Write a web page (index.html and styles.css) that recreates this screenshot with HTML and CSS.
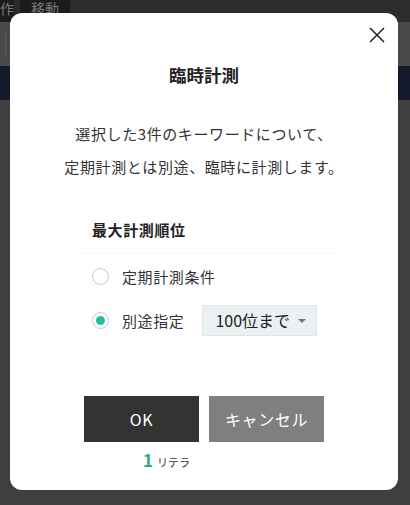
FILE: index.html
```html
<!DOCTYPE html>
<html lang="ja">
<head>
<meta charset="utf-8">
<link rel="stylesheet" href="styles.css">
</head>
<body>
<div class="page">
  <div class="topbar">
    <span class="tb-btn tb-cut">操作</span>
    <span class="tb-btn">移動</span>
  </div>
  <div class="subbar"><span class="subbar-line"></span></div>
  <div class="navbar"></div>
  <div class="content"></div>
</div>

<div class="modal">
  <button class="close" aria-label="閉じる">
    <svg width="16" height="16" viewBox="0 0 16 16"><path d="M1 1 L15 15 M15 1 L1 15" stroke="#222" stroke-width="1.5" fill="none"/></svg>
  </button>
  <h2 class="title">臨時計測</h2>
  <p class="desc">選択した3件のキーワードについて、<br>定期計測とは別途、臨時に計測します。</p>
  <div class="section">
    <div class="section-head">最大計測順位</div>
    <label class="opt">
      <span class="radio"></span>
      <span class="opt-label">定期計測条件</span>
    </label>
    <label class="opt">
      <span class="radio checked"></span>
      <span class="opt-label">別途指定</span>
      <span class="select">100位まで<span class="caret"></span></span>
    </label>
  </div>
  <div class="actions">
    <button class="btn btn-ok">OK</button>
    <button class="btn btn-cancel">キャンセル</button>
  </div>
  <div class="credit"><span class="credit-num">1</span><span class="credit-unit">リテラ</span></div>
</div>
</body>
</html>
```

FILE: styles.css
```css
html, body {
  margin: 0;
  padding: 0;
}
body {
  width: 410px;
  height: 505px;
  overflow: hidden;
  background: #3e3e3e;
  font-family: "Noto Sans CJK JP", "Noto Sans", sans-serif;
  position: relative;
}
.page {
  display: flex;
  flex-direction: column;
  height: 505px;
}
.topbar {
  height: 22px;
  background: #2c2c2c;
  display: flex;
  gap: 6px;
  align-items: flex-start;
}
.tb-btn {
  background: #1c1c1c;
  color: #7a7a7a;
  font-size: 14px;
  line-height: 17px;
  padding: 0 11px;
  height: 22px;
}
.tb-cut {
  margin-left: -16px;
  width: 30px;
  padding: 0;
  overflow: hidden;
  white-space: nowrap;
  direction: rtl;
}
.subbar {
  height: 44px;
  background: #4a4a4a;
  position: relative;
}
.subbar-line {
  display: block;
  margin-left: 5px;
  margin-top: 10px;
  width: 1px;
  height: 26px;
  background: #5c5c5c;
}
.navbar {
  height: 34px;
  background: #141a2c;
}
.content {
  flex: 1;
  background: #3f3f3f;
}

.modal {
  position: absolute;
  left: 10px;
  top: 13px;
  width: 388px;
  height: 477px;
  background: #fff;
  border-radius: 12px;
  box-sizing: border-box;
  color: #333;
}
.close {
  position: absolute;
  top: 14px;
  right: 13px;
  border: 0;
  background: none;
  padding: 0;
  width: 16px;
  height: 16px;
  display: block;
}
.close svg { display: block; }
.title {
  margin: 50px 0 0;
  font-size: 17.5px;
  line-height: 24px;
  font-weight: 700;
  text-align: center;
  color: #222;
}
.desc {
  margin: 30px 0 0;
  font-size: 15px;
  letter-spacing: 0.6px;
  line-height: 33px;
  text-align: center;
  color: #333;
}
.section {
  margin: 35px 0 0 70px;
  width: 257px;
}
.section-head {
  font-size: 15px;
  font-weight: 700;
  line-height: 24px;
  letter-spacing: 0.6px;
  padding: 0 12px 11px;
  border-bottom: 1px solid #f6f6f6;
  color: #222;
}
.opt {
  display: flex;
  align-items: center;
  height: 44px;
  padding-left: 12px;
  font-size: 15px;
  letter-spacing: 0.6px;
  color: #333;
}
.radio {
  width: 17px;
  height: 17px;
  box-sizing: border-box;
  border: 1px solid #c9c9c9;
  border-radius: 50%;
  display: flex;
  align-items: center;
  justify-content: center;
  flex: none;
}
.radio.checked::after {
  content: "";
  width: 9px;
  height: 9px;
  border-radius: 50%;
  background: #23bf9f;
}
.opt-label {
  margin-left: 13px;
}
.select {
  margin-left: 18px;
  width: 115px;
  height: 31px;
  box-sizing: border-box;
  background: #ebf1f3;
  border: 1px solid #dde6ea;
  font-size: 16px;
  letter-spacing: 0;
  color: #222;
  display: flex;
  align-items: center;
  padding-left: 12px;
  position: relative;
}
.caret {
  position: absolute;
  right: 10px;
  top: 13px;
  width: 0;
  height: 0;
  border-left: 4px solid transparent;
  border-right: 4px solid transparent;
  border-top: 4px solid #777;
}
.actions {
  margin-top: 54px;
  display: flex;
  justify-content: center;
  gap: 10px;
}
.btn {
  width: 115px;
  height: 46px;
  border: 0;
  color: #fff;
  font-family: "Noto Sans CJK JP", "Noto Sans", sans-serif;
  font-size: 16px;
  letter-spacing: 0.6px;
  padding: 0;
}
.btn-ok { background: #333; }
.btn-cancel { background: #7f7f7f; }
.credit {
  margin-top: 7px;
  padding-left: 133px;
  display: flex;
  align-items: baseline;
  line-height: 22px;
}
.credit-num {
  color: #2ea88a;
  font-weight: 700;
  font-size: 17px;
}
.credit-unit {
  margin-left: 4px;
  font-size: 11px;
  color: #333;
}
```
